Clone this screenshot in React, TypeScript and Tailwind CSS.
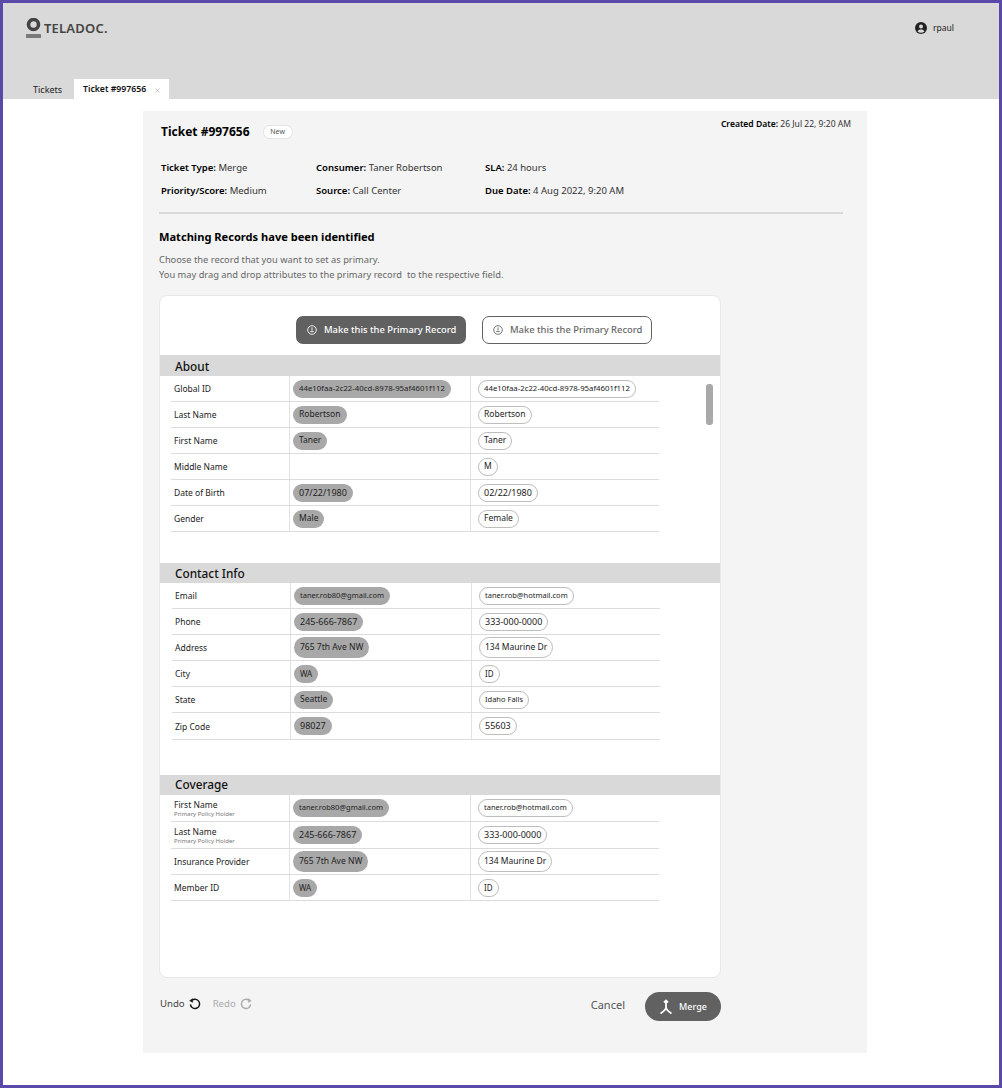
import { X } from 'lucide-react';

type Row = {
  label: string;
  note?: string;
  left?: string;
  right: string;
  height: number;
  chipClass?: string;
  rightClass?: string;
};

type Section = {
  title: string;
  rows: Row[];
  gapAfter: string;
  inset: string;
  headerClass: string;
};

const sections: Section[] = [
  {
    title: 'About',
    gapAfter: 'mb-[31px]',
    inset: 'pl-[11px]',
    headerClass: 'h-[21px] pt-[2px]',
    rows: [
      { label: 'Global ID', left: '44e10faa-2c22-40cd-8978-95af4601f112', right: '44e10faa-2c22-40cd-8978-95af4601f112', height: 26, chipClass: 'text-[7.8px]', rightClass: 'text-[7.8px]' },
      { label: 'Last Name', left: 'Robertson', right: 'Robertson', height: 26 },
      { label: 'First Name', left: 'Taner', right: 'Taner', height: 26 },
      { label: 'Middle Name', right: 'M', height: 26 },
      { label: 'Date of Birth', left: '07/22/1980', right: '02/22/1980', height: 26, chipClass: 'text-[9px]', rightClass: 'text-[9px]' },
      { label: 'Gender', left: 'Male', right: 'Female', height: 26 },
    ],
  },
  {
    title: 'Contact Info',
    gapAfter: 'mb-[35px]',
    inset: 'pl-[12px]',
    headerClass: 'h-[20px] pt-[1px]',
    rows: [
      { label: 'Email', left: 'taner.rob80@gmail.com', right: 'taner.rob@hotmail.com', height: 26, chipClass: 'text-[7.5px]', rightClass: 'text-[7.5px]' },
      { label: 'Phone', left: '245-666-7867', right: '333-000-0000', height: 26, chipClass: 'text-[9px]', rightClass: 'text-[9px]' },
      { label: 'Address', left: '765 7th Ave NW', right: '134 Maurine Dr', height: 26, chipClass: 'h-[21px]', rightClass: 'h-[21px]' },
      { label: 'City', left: 'WA', right: 'ID', height: 26, chipClass: 'text-[8px]', rightClass: 'text-[8px]' },
      { label: 'State', left: 'Seattle', right: 'Idaho Falls', height: 26, rightClass: 'text-[7.5px]' },
      { label: 'Zip Code', left: '98027', right: '55603', height: 27, chipClass: 'text-[9px]', rightClass: 'text-[9px]' },
    ],
  },
  {
    title: 'Coverage',
    gapAfter: 'mb-[76px]',
    inset: 'pl-[11px]',
    headerClass: 'h-[20px]',
    rows: [
      { label: 'First Name', note: 'Primary Policy Holder', left: 'taner.rob80@gmail.com', right: 'taner.rob@hotmail.com', height: 27, chipClass: 'text-[7.5px]', rightClass: 'text-[7.5px]' },
      { label: 'Last Name', note: 'Primary Policy Holder', left: '245-666-7867', right: '333-000-0000', height: 27, chipClass: 'text-[9px]', rightClass: 'text-[9px]' },
      { label: 'Insurance Provider', left: '765 7th Ave NW', right: '134 Maurine Dr', height: 26, chipClass: 'h-[21px]', rightClass: 'h-[21px]' },
      { label: 'Member ID', left: 'WA', right: 'ID', height: 26, chipClass: 'text-[8px]', rightClass: 'text-[8px]' },
    ],
  },
];

function MergeIcon() {
  return (
    <svg width="14" height="16" viewBox="0 0 14 16" fill="none" stroke="currentColor" strokeWidth="1.8">
      <path d="M7 1.5V8.5C7 10.5 4.5 12.5 1.5 14.5" />
      <path d="M7 8.5C7 10.5 9.5 12.5 12.5 14.5" />
      <path d="M5 3.5L7 1.5l2 2" />
    </svg>
  );
}

function TimerIcon() {
  return (
    <svg width="10" height="10" viewBox="0 0 10 10" fill="none" stroke="currentColor" strokeWidth="0.9" className="shrink-0">
      <circle cx="5" cy="5" r="4.3" />
      <path d="M5 2.4V5.6M3.2 6.6H6.8" />
    </svg>
  );
}

function UndoIcon({ flip, className }: { flip?: boolean; className: string }) {
  return (
    <svg
      width="12"
      height="12"
      viewBox="0 0 12 12"
      fill="none"
      stroke="currentColor"
      strokeWidth="1.4"
      className={`${flip ? '-scale-x-100' : ''} ${className}`}
    >
      <path d="M3.2 2.2A4.6 4.6 0 1 1 1.4 6.4" />
      <path d="M0.6 2.7L3.6 0.6V4.6Z" fill="currentColor" strokeWidth="0.4" />
    </svg>
  );
}

function UserIcon() {
  return (
    <svg width="12" height="12" viewBox="0 0 12 12" className="text-[#222]">
      <circle cx="6" cy="6" r="6" fill="currentColor" />
      <circle cx="6" cy="4.4" r="2" fill="#d9d9d9" />
      <path d="M2.6 9.4C3.2 7.9 4.4 7.5 6 7.5s2.8.4 3.4 1.9A4.6 4.6 0 0 1 6 10.8a4.6 4.6 0 0 1-3.4-1.4Z" fill="#d9d9d9" />
    </svg>
  );
}

function Field({ label, value, className }: { label: string; value: string; className?: string }) {
  return (
    <p className={className}>
      <span className="font-semibold text-black">{label}</span> {value}
    </p>
  );
}

function RecordRow({ row }: { row: Row }) {
  return (
    <div
      className="flex w-[488px] border-b border-[#dcdcdc] text-[8.5px] text-[#222]"
      style={{ height: row.height }}
    >
      <div className="flex w-[118px] flex-col justify-center pl-[3px] pt-[1px] leading-[10px]">
        <span>{row.label}</span>
        {row.note && <span className="text-[6px] leading-[8px] text-[#777]">{row.note}</span>}
      </div>
      <div className="flex w-[181px] items-center border-l border-[#e2e2e2] pl-[3px]">
        {row.left && (
          <span className={`flex h-[18px] items-center rounded-full bg-[#a8a8a8] px-[6px] ${row.chipClass ?? ''}`}>
            {row.left}
          </span>
        )}
      </div>
      <div className="flex flex-1 items-center border-l border-[#e2e2e2] pl-[7px]">
        <span className={`flex h-[18px] items-center rounded-full border border-[#bdbdbd] bg-white px-[5px] ${row.rightClass ?? ''}`}>
          {row.right}
        </span>
      </div>
    </div>
  );
}

export default function App() {
  return (
    <div className="h-[1088px] w-[1002px] overflow-hidden border-[3px] border-[#5a49a8] bg-white font-['Noto_Sans','Liberation_Sans',sans-serif]">
      <header className="flex h-[96px] flex-col justify-between bg-[#d9d9d9]">
        <div className="flex items-start justify-between pl-[23px] pr-[45px] pt-[15px]">
          <div className="flex items-center gap-[3px]">
            <svg width="15" height="20" viewBox="0 0 15 20" fill="none">
              <circle cx="7.5" cy="6.5" r="5" stroke="#444" strokeWidth="3.6" />
              <rect x="0" y="16" width="15" height="4" rx="0.5" fill="#7a7a7a" />
            </svg>
            <span className="text-[13px] font-semibold leading-none tracking-[0.2px] text-[#444]">TELADOC.</span>
          </div>
          <div className="mt-[4px] flex items-center gap-[6px] text-[8.5px] text-[#222]">
            <UserIcon />
            <span>rpaul</span>
          </div>
        </div>
        <div className="flex h-[20px] items-stretch pl-[30px] text-[9px]">
          <div className="flex w-[41px] items-center pt-[2px] text-[#222]">Tickets</div>
          <div className="flex w-[95px] items-center gap-[8px] bg-white pl-[9px] pt-[2px] text-[8.7px] font-semibold text-[#111]">
            <span>Ticket #997656</span>
            <X size={7} className="text-[#999]" />
          </div>
        </div>
      </header>

      <main className="ml-[140px] mt-[12px] h-[942px] w-[724px] bg-[#f4f4f4] pl-[16px] pr-[16px] pt-[13px]">
        <div className="flex items-start justify-between">
          <div className="flex items-center gap-[13px] pl-[2px]">
            <h1 className="text-[12px] font-bold leading-[16px] text-black">Ticket #997656</h1>
            <span className="flex h-[14px] w-[30px] items-center justify-center rounded-full border border-[#e4e4e4] bg-white text-[7px] text-[#555]">
              New
            </span>
          </div>
          <Field label="Created Date:" value="26 Jul 22, 9:20 AM" className="text-[8.55px] leading-[1px] text-[#333]" />
        </div>

        <div className="mt-[21px] grid grid-cols-[155px_169px_1fr] gap-y-[9px] pl-[2px] text-[9.5px] leading-[14px] text-[#333]">
          <Field label="Ticket Type:" value="Merge" />
          <Field label="Consumer:" value="Taner Robertson" />
          <Field label="SLA:" value="24 hours" />
          <Field label="Priority/Score:" value="Medium" />
          <Field label="Source:" value="Call Center" />
          <Field label="Due Date:" value="4 Aug 2022, 9:20 AM" />
        </div>

        <div className="mt-[14px] h-[2px] w-[684px] bg-[#d9d9d9]" />

        <h2 className="mt-[15px] text-[11.1px] font-bold leading-[16px] text-black">Matching Records have been identified</h2>
        <p className="mt-[7px] text-[9.3px] leading-[15px] text-[#666]">
          Choose the record that you want to set as primary.
          <br />
          You may drag and drop attributes to the primary record&nbsp; to the respective field.
        </p>

        <section className="relative mt-[13px] h-[683px] w-[562px] rounded-[8px] border border-[#e8e8e8] bg-white">
          <div className="flex gap-[16px] pl-[136px] pt-[20px]">
            <button type="button" className="flex h-[28px] w-[170px] items-center gap-[7px] rounded-[7px] bg-[#616161] pl-[11px] text-[9.4px] font-medium text-white">
              <TimerIcon />
              Make this the Primary Record
            </button>
            <button type="button" className="flex h-[28px] w-[170px] items-center gap-[7px] rounded-[7px] border border-[#616161] bg-white pl-[10px] text-[9.4px] font-medium text-[#666]">
              <TimerIcon />
              Make this the Primary Record
            </button>
          </div>

          <div className="mt-[11px]">
            {sections.map((section) => (
              <div key={section.title} className={section.gapAfter}>
                <div className={`flex items-center bg-[#d9d9d9] pl-[15px] text-[11.8px] font-medium text-[#111] ${section.headerClass}`}>
                  {section.title}
                </div>
                <div className={section.inset}>
                  {section.rows.map((row) => (
                    <RecordRow key={row.label} row={row} />
                  ))}
                </div>
              </div>
            ))}
          </div>

          {/* scrollbar sits over the table */}
          <div className="absolute left-[546px] top-[88px] h-[41px] w-[7px] rounded-[3px] bg-[#a9a9a9]" />
        </section>

        <div className="mt-[14px] flex w-[562px] items-center justify-between">
          <div className="mb-[4px] flex items-center gap-[4px] pl-[1px] text-[9.6px]">
            <span className="text-[#444]">Undo</span>
            <UndoIcon className="text-[#111]" />
            <span className="ml-[8px] text-[#aaa]">Redo</span>
            <UndoIcon flip className="text-[#aaa]" />
          </div>
          <div className="flex items-center gap-[20px]">
            <span className="mb-[2px] text-[11px] text-[#555]">Cancel</span>
            <button type="button" className="flex h-[29px] w-[76px] items-center justify-center gap-[6px] rounded-full bg-[#616161] text-[9px] font-medium text-white">
              <MergeIcon />
              Merge
            </button>
          </div>
        </div>
      </main>
    </div>
  );
}
